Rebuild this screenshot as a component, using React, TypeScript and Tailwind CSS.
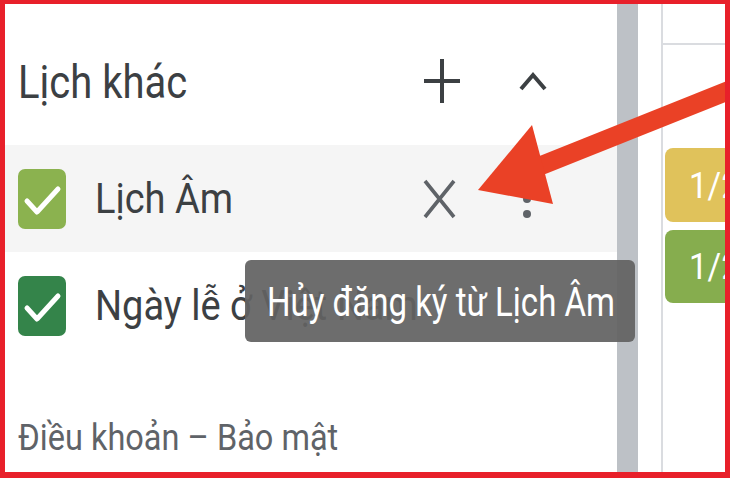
import React from "react";

const font = { fontFamily: "Roboto, 'Noto Sans', 'Liberation Sans', sans-serif" };

function CheckBox({ color }: { color: string }) {
  return (
    <div className={`w-[48px] h-[60px] shrink-0 rounded-[7px] flex items-center justify-center ${color}`}>
      <svg width="48" height="60" viewBox="0 0 48 60">
        <path d="M9 32 L19 43 L40 20" fill="none" stroke="white" strokeWidth="5" strokeLinecap="round" strokeLinejoin="round" />
      </svg>
    </div>
  );
}

export default function App() {
  return (
    <div
      className="w-[730px] h-[478px] box-border border-t-[4px] border-l-[5px] border-r-[5px] border-b-[6px] border-[#e8202a] bg-white overflow-hidden"
      style={font}
    >
      <div className="relative w-[720px] h-[468px] flex">
        {/* sidebar */}
        <div className="w-[612px] shrink-0 h-full flex flex-col text-[#3c4043]">
          <div className="h-[141px] flex items-center pl-[13px] pt-[12px] shrink-0">
            <span className="inline-block text-[40px] leading-none scale-y-[1.15] translate-y-[2px] whitespace-nowrap">Lịch khác</span>
            <div className="flex-1" />
            <svg className="shrink-0" width="36" height="44" viewBox="0 0 36 44">
              <path d="M18 0 V44 M0 22 H36" stroke="#3c4043" strokeWidth="4" />
            </svg>
            <svg className="ml-[58px] mr-[69px] shrink-0" width="30" height="23" viewBox="0 0 30 23">
              <path d="M3 20 L15 6 L27 20" fill="none" stroke="#3c4043" strokeWidth="4" />
            </svg>
          </div>
          <div className="h-[107px] bg-[#f5f5f5] flex items-center pl-[13px] shrink-0">
            <CheckBox color="bg-[#8bb24f]" />
            <span className="ml-[29px] inline-block text-[38px] leading-none scale-y-[1.1] whitespace-nowrap">Lịch Âm</span>
            <div className="flex-1" />
            <svg className="shrink-0" width="33" height="40" viewBox="0 0 33 40">
              <path d="M2 2 L31 38 M31 2 L2 38" stroke="#5f6368" strokeWidth="3.6" />
            </svg>
            <svg className="ml-[67px] mr-[86px] shrink-0" width="8" height="46" viewBox="0 0 8 46">
              <circle cx="4" cy="8" r="4" fill="#5f6368" />
              <circle cx="4" cy="23" r="4" fill="#5f6368" />
              <circle cx="4" cy="38" r="4" fill="#5f6368" />
            </svg>
          </div>
          <div className="h-[108px] flex items-center pl-[13px] shrink-0">
            <CheckBox color="bg-[#34844a]" />
            <span className="ml-[29px] inline-block text-[38px] leading-none scale-y-[1.1] whitespace-nowrap">Ngày lễ ở Việt Nam</span>
          </div>
          <div className="flex-1 pl-[13px] pt-[60px]">
            <span className="inline-block text-[32.5px] leading-[36px] text-[#5f6368] scale-y-[1.12] whitespace-nowrap">Điều khoản – Bảo mật</span>
          </div>
        </div>
        {/* scrollbar */}
        <div className="w-[21px] h-full bg-[#bdc1c6] shrink-0" />
        <div className="w-[23px] h-full shrink-0" />
        <div className="w-[2px] h-full bg-[#dadce0] shrink-0" />
        {/* right column */}
        <div className="flex-1 min-w-0 overflow-hidden flex flex-col">
          <div className="h-[39px] shrink-0" />
          <div className="h-[2px] bg-[#dadce0] shrink-0" />
          <div className="mt-[103px] ml-[2px] h-[74px] shrink-0 rounded-l-[8px] bg-[#e0c25b] flex items-center pl-[24px] text-white text-[33px] leading-none">
            <span className="inline-block scale-y-[1.1] whitespace-nowrap">1/2</span>
          </div>
          <div className="mt-[8px] ml-[2px] h-[73px] shrink-0 rounded-l-[8px] bg-[#86ad4e] flex items-center pl-[24px] text-white text-[33px] leading-none">
            <span className="inline-block scale-y-[1.1] whitespace-nowrap">1/2</span>
          </div>
        </div>

        {/* tooltip */}
        <div className="absolute left-[240px] top-[256px] w-[390px] h-[82px] rounded-[6px] bg-[rgba(98,98,98,0.93)] flex items-center pl-[22px]">
          <span className="inline-block text-white text-[33px] leading-none scale-y-[1.25] whitespace-nowrap">Hủy đăng ký từ Lịch Âm</span>
        </div>

        {/* arrow */}
        <svg className="absolute inset-0 pointer-events-none" width="720" height="468" viewBox="5 4 720 468">
          <line x1="530" y1="170" x2="745" y2="84" stroke="#ea4126" strokeWidth="19" />
          <polygon points="478,190 532,125 553,204" fill="#ea4126" />
        </svg>
      </div>
    </div>
  );
}
